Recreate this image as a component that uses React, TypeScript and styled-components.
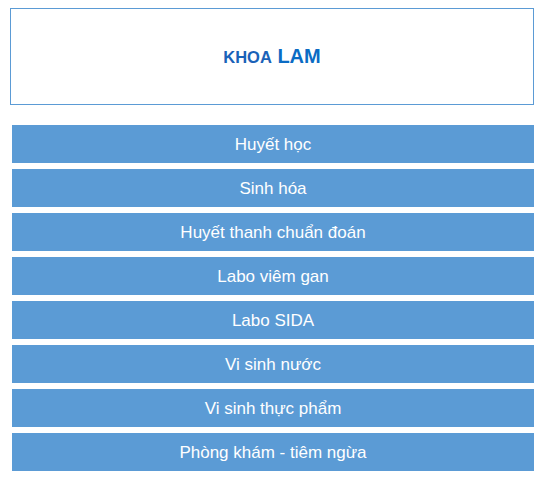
import styled, { createGlobalStyle } from "styled-components";

const GlobalStyle = createGlobalStyle`
  body {
    margin: 8px;
    background: #fff;
    font-family: "Liberation Sans", Arial, sans-serif;
  }
`

const Page = styled.div`
  display: flex;
  flex-direction: column;
  align-items: flex-start;
  padding-left: 2px;
`

const Header = styled.div`
  box-sizing: border-box;
  width: 524px;
  height: 97px;
  border: 1px solid #5b9bd5;
  display: flex;
  align-items: center;
  justify-content: center;
  padding-bottom: 1px;
`

const Title = styled.h1`
  margin: 0;
  font-weight: 700;
  color: #0b6cc4;
  font-size: 20px;
  line-height: 1;
  span {
    font-size: 16.5px;
    color: #1a62b8;
  }
`

const Menu = styled.nav`
  margin-top: 20px;
  margin-left: 2px;
  display: flex;
  flex-direction: column;
  gap: 6px;
`

const Item = styled.a`
  box-sizing: border-box;
  width: 522px;
  height: 38px;
  background: #5b9bd5;
  color: #fff;
  font-size: 17px;
  display: flex;
  align-items: center;
  justify-content: center;
  padding-top: 2px;
  text-decoration: none;
  cursor: pointer;
`

const items = [
    'Huyết học',
    'Sinh hóa',
    'Huyết thanh chuẩn đoán',
    'Labo viêm gan',
    'Labo SIDA',
    'Vi sinh nước',
    'Vi sinh thực phẩm',
    'Phòng khám - tiêm ngừa',
]

export default function App() {
    return (
        <>
            <GlobalStyle/>
            <Page>
                <Header>
                    <Title><span>KHOA</span> LAM</Title>
                </Header>
                <Menu>
                    {items.map(name => <Item key={name}>{name}</Item>)}
                </Menu>
            </Page>
        </>
    )
}
